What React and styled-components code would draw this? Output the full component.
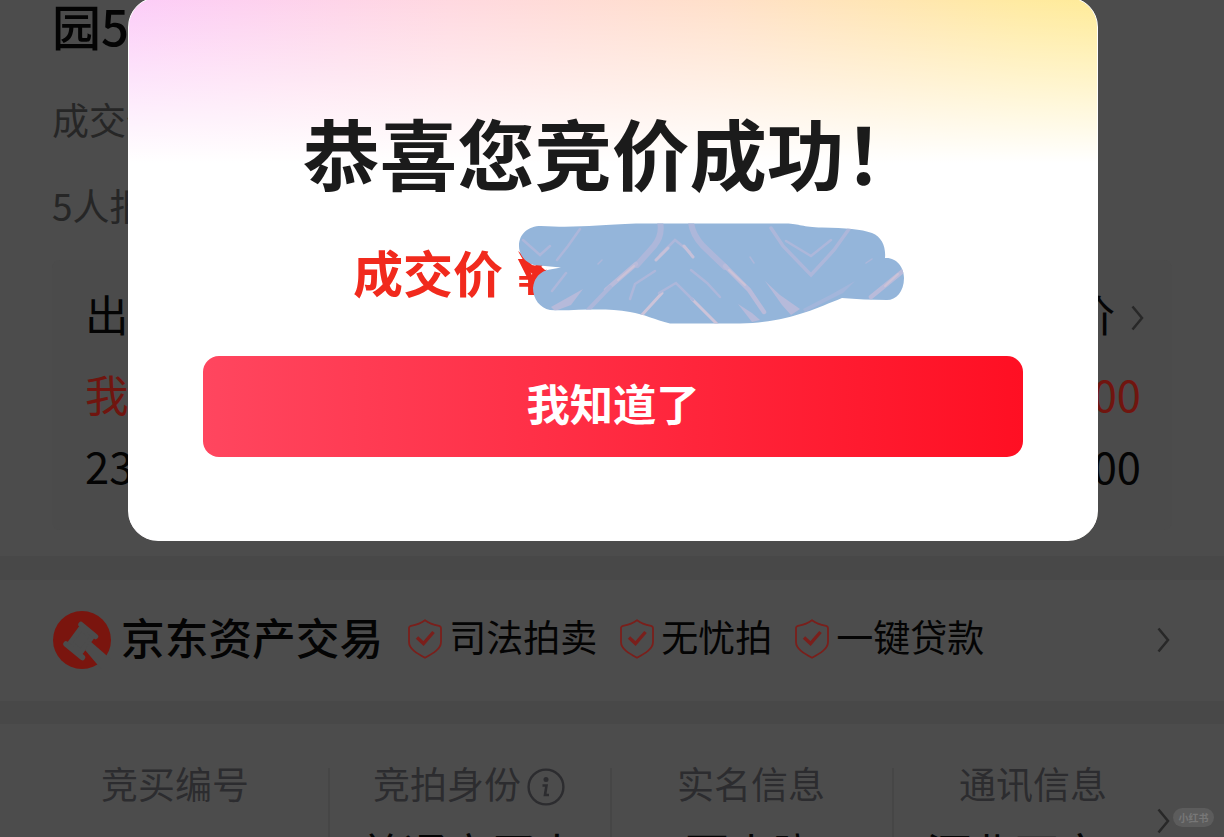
import styled, { createGlobalStyle, ThemeProvider } from 'styled-components'

const theme = {
	page: '#4c4c4c',
	band: '#484848',
	card: '#4b4b4b',
	text: '#040404',
	muted: '#262626',
	label: '#2c2c2f',
	red: '#70150f',
	line: '#464646',
	arrow: '#282828',
}

const infoColumns = [
	{ label: '竞买编号', value: '233528898' },
	{ label: '竞拍身份', value: '普通竞买人', hint: true },
	{ label: '实名信息', value: '百小晓' },
	{ label: '通讯信息', value: '河北石家...' },
]

const services = ['司法拍卖', '无忧拍', '一键贷款']

export default function App() {
	return (
		<ThemeProvider theme={theme}>
			<GlobalStyle />
			<Screen>
				<Summary>
					<LotTitle>园5</LotTitle>
					<DealLine>成交价</DealLine>
					<BidCount>5人报</BidCount>
					<BidCard>
						<BidRow>
							<span>出</span>
							<MoreBids>
								价
								<Chevron height={26} />
							</MoreBids>
						</BidRow>
						<BidRow $height={80} $red>
							<span>我</span>
							<span>00</span>
						</BidRow>
						<BidRow $height={64}>
							<span>23</span>
							<span>00</span>
						</BidRow>
					</BidCard>
				</Summary>

				<BrandBar>
					<HammerLogo />
					<BrandName>京东资产交易</BrandName>
					<Services>
						{services.map((name) => (
							<Service key={name}>
								<Shield />
								{name}
							</Service>
						))}
					</Services>
					<Chevron height={26} />
				</BrandBar>

				<InfoBar>
					{infoColumns.map(({ label, value, hint }) => (
						<InfoColumn key={label}>
							<InfoLabel>
								{label}
								{hint && <InfoIcon />}
							</InfoLabel>
							<InfoValue>{value}</InfoValue>
						</InfoColumn>
					))}
					<InfoArrow>
						<Chevron height={26} />
					</InfoArrow>
				</InfoBar>

				<Overlay>
					<Modal>
						<ModalTitle>恭喜您竞价成功！</ModalTitle>
						<Price>
							<PriceLabel>成交价</PriceLabel>
							<Currency>¥</Currency>
							<Scribble />
						</Price>
						<ConfirmButton>我知道了</ConfirmButton>
					</Modal>
				</Overlay>
				<Watermark>小红书</Watermark>
			</Screen>
		</ThemeProvider>
	)
}

function Chevron({ height }) {
	return (
		<ChevronSvg width={height / 2} height={height} viewBox='0 0 13 26'>
			<path d='M1.5 1.5 11 13 1.5 24.5' />
		</ChevronSvg>
	)
}

function Shield() {
	return (
		<svg width='34' height='40' viewBox='0 0 34 40' fill='none' stroke='#7a1f1b'>
			<path
				d='M17 1.2 C14 3.5 7 6 3 6.8 Q1 7.3 1 9.5 V23 C1 30 9 34.5 17 38.8 C25 34.5 33 30 33 23 V9.5 Q33 7.3 31 6.8 C27 6 20 3.5 17 1.2Z'
				strokeWidth='1.8'
				strokeLinejoin='round'
			/>
			<path d='M9 18.5 15.5 24.5 25.5 13' strokeWidth='3.4' />
		</svg>
	)
}

function HammerLogo() {
	return (
		<LogoSvg width='58' height='58' viewBox='0 0 58 58'>
			<circle cx='29' cy='29' r='29' fill='#7a150e' />
			<g fill='#4c4c4c' stroke='#4c4c4c' strokeLinejoin='round' strokeLinecap='round'>
				<path d='M28 17 L39 26 L28 41 L17 32 Z' strokeWidth='5' />
				<path d='M28 13.5 L42.5 25.5 M13 33 L29.5 46.5' strokeWidth='5.5' />
				<path d='M37 30 L59 49 L49 59 L32 39 Z' stroke='none' />
			</g>
		</LogoSvg>
	)
}

function InfoIcon() {
	return (
		<svg width='38' height='38' viewBox='0 0 38 38' fill='none' stroke='#2c2c2f'>
			<circle cx='19' cy='19' r='17.4' strokeWidth='2.4' />
			<circle cx='19' cy='11.5' r='2.5' fill='#2c2c2f' stroke='none' />
			<path d='M15.5 17.5 H19.5 L18 27 H22' strokeWidth='2.6' />
		</svg>
	)
}

// Marker stroke that hides the amount
function Scribble() {
	return (
		<ScribbleSvg width='388' height='102' viewBox='518 222 388 102'>
			<defs>
				<clipPath id='marker'>
					<path d={markerShape} />
				</clipPath>
			</defs>
			<path d='M518 251 L525 257 L532 265 L548 268 L540 279 L530 272 Z' fill='#f12a1d' />
			<path d='M541 266.5 L562 267.5 L545 270 Z' fill='#fff' />
			<path d={markerShape} fill='#94b5da' />
			<g clipPath='url(#marker)' fill='none' stroke='#adb7da' strokeLinecap='round'>
				<g strokeWidth='6'>
					<path d='M660 222 Q663 235 654 246 L637 265' />
					<path d='M691 222 Q692 234 703 246 L725 267' />
				</g>
				<g strokeWidth='4.5' stroke='#b9bbda'>
					<path d='M636 264 L606 290' />
					<path d='M725 266 L749 290 L764 312' />
					<path d='M903 271 L871 297' />
				</g>
				<path d='M634 266 L618 280 M729 270 L745 285 M898 274 L885 286' stroke='#ccc2d6' strokeWidth='2' />
				<g fill='#b6bada' stroke='none'>
					<path d='M765 281 L780 295 L800 309 L791 315 L782 305 Z' />
					<path d='M738 304 L752 313 L760 320 L752 322 Z' />
					<path d='M583 289 L571 305 L555 311 L551 307 Z' />
					<path d='M855 281 L843 293 L805 312 L803 309 L832 294 Z' fill='#a3b6db' />
				</g>
				<g strokeWidth='2.5'>
					<path d='M610 287 L588 310' strokeWidth='4' />
					<path d='M641 316 L662 293 M692 299 L717 324' stroke='#ccc3d8' strokeWidth='3' />
					<path d='M655 271 L635 284 L630 299 M691 270 L707 283 L720 297' />
					<path d='M659 293 L676 283 L693 300' />
					<path d='M771 228 L783 246 L811 275 L834 250 L849 229' strokeWidth='3.5' />
					<path d='M786 241 L811 256 L831 240' />
					<path d='M580 229 L568 246 L557 260 M523 240 L540 255 L550 246' />
					<path d='M566 273 L552 291 M660 255 L675 240 L690 252' />
					<path d='M656 260 L668 248 M684 246 L693 257' stroke='#c6c0d8' strokeWidth='3' />
					<path d='M598 264 L602 260 M750 257 L754 263 M866 263 L872 259' strokeWidth='1.5' />
				</g>
			</g>
		</ScribbleSvg>
	)
}

const markerShape =
	'M519 246 C519 234 528 226 541 226 C578 228 596 225 636 223.5 H786 C800 224 802 227 822 227.5 C846 228 861 229 872 233 C882 237 886 247 885 258 C896 257 904 267 904 278 C904 292 896 300 887 300 C872 300 856 299 842 298 C812 310 788 322 740 323.5 H670 C655 320 644 314 630 312 C604 307 576 311 550 310 C540 308 533 299 533 288 C534 278 540 271 550 269.5 L561 267.5 L534 265 C525 262 519 255 519 246Z'

const GlobalStyle = createGlobalStyle`
	* {
		box-sizing: border-box;
	}

	body {
		margin: 0;
		background-color: #4c4c4c;
		font-family: 'Noto Sans CJK SC', sans-serif;
	}
`

const Screen = styled.div`
	position: relative;
	width: 1224px;
	height: 837px;
	overflow: hidden;
	background-color: ${({ theme }) => theme.page};
	color: ${({ theme }) => theme.text};
`

const Summary = styled.section`
	height: 580px;
	padding: 0 52px;
	border-bottom: 24px solid ${({ theme }) => theme.band};
`

const LotTitle = styled.h1`
	margin: 0;
	height: 53px;
	font-size: 49px;
	line-height: 49px;
	font-weight: 500;
`

const DealLine = styled.p`
	margin: 38px 0 0;
	height: 56px;
	font-size: 37px;
	line-height: 56px;
	color: ${({ theme }) => theme.muted};
`

const BidCount = styled(DealLine)`
	margin-top: 30px;
`

const BidCard = styled.div`
	height: 270px;
	margin-top: 27px;
	padding: 14px 31px 0 33px;
	border-radius: 8px;
	background-color: ${({ theme }) => theme.card};
`

const BidRow = styled.div`
	display: flex;
	align-items: center;
	justify-content: space-between;
	height: ${({ $height = 80 }) => $height}px;
	font-size: 43.5px;
	line-height: 1;
	color: ${({ $red, theme }) => ($red ? theme.red : theme.text)};
`

const MoreBids = styled.span`
	display: flex;
	align-items: center;
	gap: 16px;
	margin-right: -3px;

	svg {
		margin-top: 8px;
	}
`

const ChevronSvg = styled.svg`
	fill: none;
	stroke: ${({ theme }) => theme.arrow};
	stroke-width: 2.5;
	flex-shrink: 0;
`

const BrandBar = styled.section`
	display: flex;
	align-items: center;
	height: 144px;
	padding: 0 54px 2px 53px;
	border-bottom: 23px solid ${({ theme }) => theme.band};
`

const LogoSvg = styled.svg`
	flex-shrink: 0;
`

const BrandName = styled.h2`
	margin: -8px 0 0 10px;
	font-size: 43.7px;
	line-height: 60px;
	font-weight: 500;
	white-space: nowrap;
`

const Services = styled.div`
	display: flex;
	gap: 23px;
	margin: -8px auto 0 25px;
`

const Service = styled.div`
	display: flex;
	align-items: center;
	gap: 7px;
	font-size: 37px;
	line-height: 50px;
	white-space: nowrap;

	svg {
		margin-top: 7px;
	}
`

const InfoBar = styled.section`
	position: relative;
	display: grid;
	grid-template-columns: 306px 282px 282px 282px;
	padding: 29px 0 0 22px;
`

const InfoColumn = styled.div`
	display: flex;
	flex-direction: column;
	align-items: center;
	height: 110px;

	& + & {
		background: linear-gradient(${({ theme }) => theme.line}, ${({ theme }) => theme.line}) 0 15px / 2px 90px no-repeat;
	}
`

const InfoLabel = styled.div`
	display: flex;
	align-items: center;
	gap: 6px;
	height: 60px;
	font-size: 37px;
	line-height: 60px;
	color: ${({ theme }) => theme.label};

	svg {
		margin-top: 8px;
	}
`

const InfoValue = styled.div`
	margin-top: 9px;
	font-size: 44px;
	line-height: 60px;
	white-space: nowrap;
`

const InfoArrow = styled.div`
	position: absolute;
	top: 84px;
	right: 54px;
`

const Overlay = styled.div`
	position: absolute;
	inset: 0;
	display: flex;
	align-items: flex-start;
	justify-content: center;
	padding-left: 2px;
`

const Modal = styled.div`
	display: flex;
	flex-direction: column;
	align-items: center;
	width: 970px;
	height: 544px;
	margin-top: -3px;
	padding-top: 96px;
	border: 1px solid #fff;
	border-radius: 30px;
	background:
		linear-gradient(180deg, rgba(255, 255, 255, 0) 0, rgba(255, 255, 255, 0.5) 85px, #fff 165px),
		linear-gradient(90deg, #fcccf8 0%, #ffd8e0 33%, #ffe0c8 62%, #ffeaa0 92%, #ffeb98 100%);
`

const ModalTitle = styled.h2`
	margin: 0 2px 0 0;
	font-size: 77.4px;
	line-height: 114px;
	font-weight: 700;
	color: #1b1b1b;
	white-space: nowrap;
`

const Price = styled.div`
	display: flex;
	align-items: center;
	align-self: flex-start;
	height: 102px;
	margin: 14px 0 0 224px;
	font-size: 50px;
	line-height: 1;
	font-weight: 700;
	color: #f12a1d;
	white-space: nowrap;
`

const PriceLabel = styled.span`
	margin-top: -5px;
`

const Currency = styled.span`
	width: 30px;
	margin-left: 14px;
`

const ScribbleSvg = styled.svg`
	position: relative;
	flex-shrink: 0;
	margin-left: -29px;
`

const ConfirmButton = styled.button`
	width: 820px;
	height: 101px;
	margin-top: 32px;
	padding: 0 0 9px;
	border: 0;
	border-radius: 16px;
	background: linear-gradient(90deg, #ff465f, #ff0f23);
	color: #fff;
	font-family: inherit;
	font-size: 43.3px;
	font-weight: 700;
`

const Watermark = styled.div`
	position: absolute;
	right: 10px;
	bottom: 10px;
	width: 41px;
	height: 19px;
	border-radius: 10px;
	background-color: #5c5c5c;
	color: #777;
	font-size: 10px;
	font-weight: 700;
	line-height: 19px;
	text-align: center;
`
